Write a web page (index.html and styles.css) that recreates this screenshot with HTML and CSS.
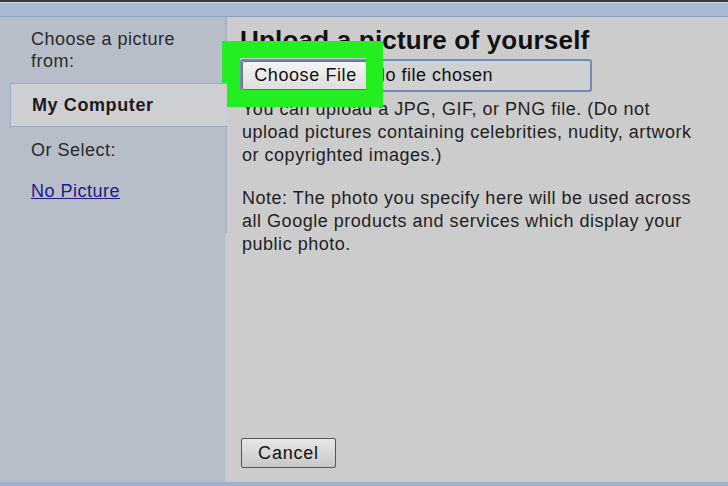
FILE: index.html
```html
<!DOCTYPE html>
<html>
<head>
<meta charset="utf-8">
<link rel="stylesheet" href="styles.css">
</head>
<body>
<div class="frame">
  <div class="topbar"></div>
  <div class="main">
    <aside class="side">
      <p class="side-label">Choose a picture from:</p>
      <div class="side-item active">My Computer</div>
      <p class="side-label or">Or Select:</p>
      <a class="side-link" href="#">No Picture</a>
    </aside>
    <section class="content">
      <h1 class="title">Upload a picture of yourself</h1>
      <div class="file-row">
        <div class="file-input">
          <span class="btn choose">Choose File</span>
          <span class="file-name">No file chosen</span>
        </div>
        <div class="highlight"></div>
      </div>
      <p class="text">You can upload a JPG, GIF, or PNG file. (Do not upload pictures containing celebrities, nudity, artwork or copyrighted images.)</p>
      <p class="text">Note: The photo you specify here will be used across all Google products and services which display your public photo.</p>
      <div class="spacer"></div>
      <div class="actions"><span class="btn cancel">Cancel</span></div>
    </section>
  </div>
  <div class="bottombar"></div>
</div>
</body>
</html>
```
FILE: styles.css
```css
* { box-sizing: border-box; }
html, body { margin: 0; padding: 0; }
body {
  width: 728px;
  height: 486px;
  overflow: hidden;
  font-family: "Liberation Sans", Arial, sans-serif;
  background: #cccccc;
}
.frame {
  display: flex;
  flex-direction: column;
  height: 486px;
}
.topbar {
  height: 17px;
  flex: none;
  background: #a8b9d2;
  border-top: 2px solid #3a3a3a;
  border-bottom: 1px solid #8ea2c2;
  box-shadow: inset 0 1px 0 #d0d6e0;
}
.main {
  flex: 1;
  display: flex;
  min-height: 0;
}
.side {
  position: relative;
  width: 227px;
  flex: none;
  background: #b8bec9;
  border-right: 2px solid #c4c8ce;
  padding-top: 11px;
  display: flex;
  flex-direction: column;
}
.side::after {
  content: "";
  position: absolute;
  right: -2px;
  top: 0;
  width: 2px;
  height: 216px;
  background: #a7b3c6;
}
.side-label {
  margin: 0 0 0 31px;
  font-size: 18px;
  line-height: 22px;
  letter-spacing: 0.5px;
  color: #2a2a2a;
  width: 180px;
}
.side-item {
  margin: 11px -2px 0 10px;
  height: 44px;
  display: flex;
  align-items: center;
  padding-left: 21px;
  font-size: 18px;
  letter-spacing: 0.6px;
  font-weight: bold;
  color: #1a1a1a;
  background: #cdcfd2;
  border: 1px solid #9babc3;
  border-right: none;
  position: relative;
  z-index: 1;
}
.side-label.or {
  margin-top: 12px;
}
.side-link {
  margin: 20px 0 0 31px;
  font-size: 18px;
  letter-spacing: 0.5px;
  color: #1c1c8a;
  text-decoration: underline;
  align-self: flex-start;
}
.content {
  flex: 1;
  display: flex;
  flex-direction: column;
  padding: 8px 0 14px 13px;
  background: #cccccc;
}
.title {
  margin: 0;
  font-size: 26px;
  line-height: 30px;
  letter-spacing: 0.2px;
  font-weight: bold;
  color: #111;
}
.file-row {
  position: relative;
  margin-top: 4px;
}
.file-input {
  width: 352px;
  height: 33px;
  border: 2px solid #6f8bb8;
  border-radius: 3px;
  display: flex;
  align-items: center;
  background: #cfd0d2;
}
.btn {
  display: inline-flex;
  align-items: center;
  justify-content: center;
  font-size: 18px;
  letter-spacing: 0.6px;
  color: #111;
  background: linear-gradient(#f4f4f4, #dedede);
  border: 1px solid #707070;
  border-radius: 2px;
}
.choose {
  width: 127px;
  height: 29px;
}
.file-name {
  margin-left: 3px;
  font-size: 18px;
  letter-spacing: 0.5px;
  color: #111;
}
.highlight {
  position: absolute;
  left: -18px;
  top: -18px;
  width: 161px;
  height: 66px;
  border: 17px solid #22ee22;
  border-left-width: 18px;
  pointer-events: none;
}
.text {
  margin: 6px 0 0 2px;
  width: 462px;
  font-size: 18px;
  line-height: 23px;
  color: #1f1f1f;
  letter-spacing: 0.52px;
}
.text + .text { margin-top: 20px; }
.spacer { flex: 1; }
.actions { margin-left: 1px; }
.cancel {
  width: 95px;
  height: 30px;
  font-size: 18px;
  letter-spacing: 0.8px;
  background: linear-gradient(#e6e6e6, #c8c8c8);
  border-color: #555;
}
.bottombar {
  height: 4px;
  flex: none;
  background: #9eb2cf;
}
```
